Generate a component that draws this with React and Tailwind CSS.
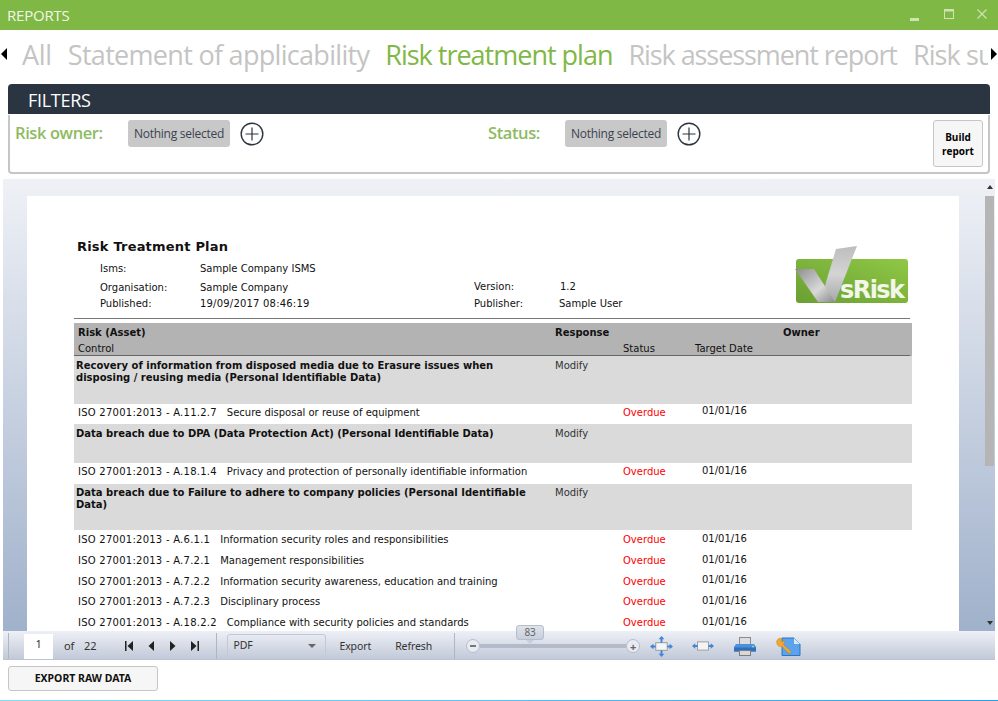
const tabs = [
  { label: 'All', cls: 'tracking-[-0.3px] text-[#c4c4c4]' },
  { label: 'Statement of applicability', cls: 'tracking-[-0.7px] text-[#c4c4c4]' },
  { label: 'Risk treatment plan', cls: 'tracking-[-1px] text-[#80b845]' },
  { label: 'Risk assessment report', cls: 'tracking-[-1.08px] text-[#c4c4c4]' },
  { label: 'Risk summary', cls: 'tracking-[-0.9px] text-[#c4c4c4]' },
]

const groups = [
  {
    risk: ['Recovery of information from disposed media due to Erasure issues when', 'disposing / reusing media (Personal Identifiable Data)'],
    h: 'h-[48px] pt-[4px]',
    controls: [{ name: 'ISO 27001:2013 - A.11.2.7', title: 'Secure disposal or reuse of equipment', h: 'h-[20px] pb-[4px]' }],
  },
  {
    risk: ['Data breach due to DPA (Data Protection Act) (Personal Identifiable Data)'],
    h: 'h-[39px] pt-[4px]',
    controls: [{ name: 'ISO 27001:2013 - A.18.1.4', title: 'Privacy and protection of personally identifiable information', h: 'h-[21px] pb-[4px]' }],
  },
  {
    risk: ['Data breach due to Failure to adhere to company policies (Personal Identifiable', 'Data)'],
    h: 'h-[46px] pt-[3px]',
    controls: [
      { name: 'ISO 27001:2013 - A.6.1.1', title: 'Information security roles and responsibilities', h: 'h-[21px] pb-[2px]' },
      { name: 'ISO 27001:2013 - A.7.2.1', title: 'Management responsibilities', h: 'h-[21px] pb-[2px]' },
      { name: 'ISO 27001:2013 - A.7.2.2', title: 'Information security awareness, education and training', h: 'h-[20px] pb-[2px]' },
      { name: 'ISO 27001:2013 - A.7.2.3', title: 'Disciplinary process', h: 'h-[21px] pb-[2px]' },
      { name: 'ISO 27001:2013 - A.18.2.2', title: 'Compliance with security policies and standards', h: 'h-[21px] pb-[2px]' },
    ],
  },
]

function PlusCircle() {
  return (
    <svg width="24" height="24" viewBox="0 0 24 24" fill="none" stroke="#2b3541">
      <circle cx="12" cy="12" r="10.8" strokeWidth="1.4" />
      <path d="M5.5 12h13M12 5.5v13" strokeWidth="1.2" />
    </svg>
  )
}

function Logo() {
  return (
    <svg width="114" height="60" viewBox="0 0 114 60" className="mt-[-10px] shrink-0">
      <defs>
        <linearGradient id="lg" x1="0" x2="1" y1="1" y2="0">
          <stop offset="0" stopColor="#6a9f33" />
          <stop offset="1" stopColor="#8fc845" />
        </linearGradient>
        <linearGradient id="lv" x1="0" x2="1" y1="0" y2="1">
          <stop offset="0" stopColor="#8c8c8c" />
          <stop offset="0.6" stopColor="#d9d9d9" />
          <stop offset="1" stopColor="#8a8a8a" />
        </linearGradient>
        <linearGradient id="ls" x1="0" x2="0" y1="1" y2="0">
          <stop offset="0" stopColor="#a8a8a8" />
          <stop offset="0.5" stopColor="#d4d4d4" />
          <stop offset="1" stopColor="#bdbdbd" />
        </linearGradient>
      </defs>
      <rect x="1" y="15" width="112" height="44" rx="3" fill="url(#lg)" />
      <path d="M41 5 L62 2 L40 58 L25 58 Z" fill="url(#ls)" />
      <path d="M0 25 L19 25 L40 58 L23 58 Z" fill="url(#lv)" />
      <text x="45" y="54" fontFamily="'DejaVu Sans', sans-serif" fontWeight="700" fontSize="24" fill="#f2f7ea" textLength="65">sRisk</text>
    </svg>
  )
}

function TransportIcon({ d }) {
  return (
    <svg width="8" height="10" viewBox="0 0 8 10" fill="#222">
      <path d={d} />
    </svg>
  )
}

function FitPage() {
  return (
    <svg width="23" height="21" viewBox="0 0 24 22">
      <rect x="6" y="7" width="12" height="8" fill="#f4f4f4" stroke="#9a9a9a" />
      <path d="M12 0l3 3.5H9zM12 22l-3-3.5h6zM0 11l3.500-3v6zM24 11l-3.500 3V8z" fill="#3f86d8" />
      <path d="M11 3h2v4h-2zM11 15h2v4h-2zM3 10h3v2H3zM18 10h3v2h-3z" fill="#3f86d8" />
    </svg>
  )
}

function FitWidth() {
  return (
    <svg width="22" height="12" viewBox="0 0 24 12">
      <rect x="6" y="1.500" width="12" height="9" fill="#f4f4f4" stroke="#9a9a9a" />
      <path d="M0 6l3.500-3v6zM24 6l-3.500 3V3z" fill="#3f86d8" />
      <path d="M3 5h3v2H3zM18 5h3v2h-3z" fill="#3f86d8" />
    </svg>
  )
}

function Printer() {
  return (
    <svg width="22" height="19" viewBox="0 0 22 19">
      <rect x="5.500" y="0.500" width="11" height="7" fill="#dcdcdc" stroke="#8c8c8c" />
      <path d="M2 7h18l2 3v4.500H0V10z" fill="#4a90dd" />
      <rect x="0" y="10.500" width="22" height="4" fill="#2f6fbc" />
      <rect x="5.500" y="13.500" width="11" height="5" fill="#d8d8d8" stroke="#7d7d7d" />
      <circle cx="19" cy="9.500" r="1" fill="#8fe08f" />
    </svg>
  )
}

function Params() {
  return (
    <svg width="25" height="19" viewBox="0 0 25 19">
      <path d="M6 1h12l6 6v11.500H6z" fill="#5ba4ec" stroke="#2f74c4" />
      <path d="M18 1v6h6z" fill="#d6e9fb" />
      <path d="M1 3.500c1-2 3.500-2.800 5-2L4.400 3.700l1.400 1.400L8 3.400c.8 1.400.3 3-.7 4l8 7.400-2 2-7.600-7.600c-1.500.6-3 .2-4-1C.9 7 .4 5 1 3.500z" fill="#f0a92c" stroke="#c47d12" strokeWidth="0.5" />
    </svg>
  )
}

function ToolSep() {
  return <div className="w-px h-[26px] bg-[#aeb6c6]" />
}

export default function App() {
  return (
    <div className="w-[998px] h-[701px] bg-white flex flex-col overflow-hidden font-['Open_Sans',sans-serif]">
      <div className="h-[30px] bg-[#80b845] flex items-center justify-between pl-[7px] pr-[11px] shrink-0">
        <span className="text-[#f1f7e8] text-[15px] tracking-[-0.2px]">REPORTS</span>
        <div className="flex items-start">
          <svg width="9" height="3" viewBox="0 0 9 3" className="mt-[9px]"><rect width="9" height="3" fill="#cfe3b4" /></svg>
          <svg width="10" height="10" viewBox="0 0 10 10" fill="none" stroke="#cfe3b4" className="ml-[25px]">
            <rect x="0.500" y="0.500" width="9" height="9" />
            <path d="M0 1.500h10" strokeWidth="2" />
          </svg>
          <svg width="10" height="10" viewBox="0 0 10 10" fill="none" stroke="#cfe3b4" strokeWidth="1.200" className="ml-[23px]">
            <path d="M0.500 0.500l9 9M9.500 0.500l-9 9" />
          </svg>
        </div>
      </div>

      <div className="h-[50px] flex items-center relative shrink-0 overflow-hidden pl-[22px] pr-[6px]">
        <div className="flex gap-[16px] text-[27px] whitespace-nowrap overflow-hidden w-[966px]">
          {tabs.map(t => (
            <span key={t.label} className={t.cls}>{t.label}</span>
          ))}
        </div>
        <div className="absolute left-[1px] top-[18px] w-0 h-0 border-y-[6px] border-y-transparent border-r-[6px] border-r-black" />
        <div className="absolute right-[1px] top-[18px] w-0 h-0 border-y-[6px] border-y-transparent border-l-[6px] border-l-black" />
      </div>

      <div className="px-[8px] mt-[4px] shrink-0">
        <div className="h-[30px] bg-[#2b3541] rounded-t-[4px] flex items-center pl-[20px] pt-[2px] text-white text-[18px] tracking-[-0.3px]">FILTERS</div>
        <div className="h-[59px] border-2 border-t-0 border-[#c6c6c6] rounded-b-[4px] flex pl-[5px] pr-[5px] pt-[5px] mt-[1px]">
          <span className="w-[113px] text-[#8dbb5f] text-[16.5px] font-semibold tracking-[-0.4px] pt-[1px] shrink-0">Risk owner:</span>
          <div className="w-[102px] h-[27px] bg-[#c8c8c8] rounded-[3px] text-[#3a4450] text-[12px] tracking-[-0.25px] flex items-center justify-center shrink-0">Nothing selected</div>
          <div className="ml-[10px] mt-[2px] shrink-0"><PlusCircle /></div>
          <span className="ml-[224px] w-[77px] text-[#8dbb5f] text-[16.5px] font-semibold tracking-[-0.4px] pt-[1px] shrink-0">Status:</span>
          <div className="w-[102px] h-[27px] bg-[#c8c8c8] rounded-[3px] text-[#3a4450] text-[12px] tracking-[-0.25px] flex items-center justify-center shrink-0">Nothing selected</div>
          <div className="ml-[10px] mt-[2px] shrink-0"><PlusCircle /></div>
          <button className="ml-auto w-[50px] h-[47px] bg-[#f6f6f6] border border-[#c6c6c6] rounded-[3px] text-[10px] leading-[14px] font-bold text-black pt-[1px]">Build<br />report</button>
        </div>
      </div>

      <div className="mt-[5px] ml-[3px] w-[992px] h-[481px] flex flex-col shrink-0">
        <div className="h-[452px] flex bg-gradient-to-b from-[#eff1f6] to-[#a0b1cb] overflow-hidden">
          <div className="pl-[24px] pt-[17px] w-[982px] shrink-0">
            <div className="w-[932px] h-[435px] bg-white overflow-hidden font-['DejaVu_Sans',sans-serif] text-[10px] text-[#111] flex flex-col">
              <div className="pl-[50px] pr-[50px] pt-[43px] flex-1">
                <h1 className="text-[13px] leading-[15px] font-bold tracking-[0.2px]">Risk Treatment Plan</h1>
                <div className="flex justify-between h-[65px] border-b border-[#777] ml-[-3px] pl-[26px] pr-[1px] w-[836px]">
                  <div className="grid grid-cols-[100px_274px_85px_auto] grid-rows-[20px_18px_14px] items-center pt-[4px] h-fit">
                    <span>Isms:</span>
                    <span className="col-span-3">Sample Company ISMS</span>
                    <span>Organisation:</span>
                    <span>Sample Company</span>
                    <span className="mt-[-2px]">Version:</span>
                    <span className="mt-[-2px] ml-[1px]">1.2</span>
                    <span>Published:</span>
                    <span className="tracking-[0.2px]">19/09/2017 08:46:19</span>
                    <span>Publisher:</span>
                    <span>Sample User</span>
                  </div>
                  <Logo />
                </div>
                <div className="ml-[-3px] w-[838px] mt-[4px]">
                  <div className="h-[33px] bg-[#b3b3b3]">
                    <div className="grid grid-cols-[477px_228px_auto] h-[18px] pt-[1px] items-center pl-[4px] font-bold">
                      <span>Risk (Asset)</span>
                      <span>Response</span>
                      <span>Owner</span>
                    </div>
                    <div className="grid grid-cols-[545px_72px_auto] h-[11px] items-center pl-[4px]">
                      <span>Control</span>
                      <span>Status</span>
                      <span>Target Date</span>
                    </div>
                    <div className="h-px bg-[#666] mt-[3px] w-[836px]" />
                  </div>
                  {groups.map((g, i) => (
                    <div key={i}>
                      <div className={`${g.h} bg-[#dadada] grid grid-cols-[479px_auto] pl-[2px] leading-[12px]`}>
                        <div className="font-bold">{g.risk.map(line => <div key={line}>{line}</div>)}</div>
                        <span className="text-[#333]">Modify</span>
                      </div>
                      {g.controls.map(c => (
                        <div key={c.name} className={`${c.h} grid grid-cols-[545px_79px_auto] items-center pl-[4px]`}>
                          <span className="whitespace-nowrap"><span className="tracking-[0.25px]">{c.name}</span><span className="ml-[10px]">{c.title}</span></span>
                          <span className="text-[#f00]">Overdue</span>
                          <span className="mt-[-3px]">01/01/16</span>
                        </div>
                      ))}
                    </div>
                  ))}
                </div>
              </div>
            </div>
          </div>
          <div className="w-[10px] flex flex-col items-center pt-[6px]">
            <div className="w-0 h-0 border-x-[3.5px] border-x-transparent border-b-[4px] border-b-[#333]" />
            <div className="w-[9px] h-[270px] bg-[#b5b5b5] mt-[7px] shrink-0 self-start" />
            <div className="w-0 h-0 border-x-[3.5px] border-x-transparent border-t-[4px] border-t-[#333] mt-[155px] shrink-0" />
          </div>
        </div>

        <div className="h-[29px] pt-[2px] bg-gradient-to-b from-[#eef0f6] to-[#c2c9d8] border-b border-[#bcc4d3] flex items-center text-[10.5px] tracking-[-0.1px] text-[#333] font-['Noto_Sans',sans-serif]">
          <div className="ml-[5px]"><ToolSep /></div>
          <div className="ml-[15px] w-[29px] h-[25px] bg-white flex items-center justify-center text-[11px] pb-[4px]">1</div>
          <span className="ml-[11px] w-[20px] text-[11px]">of</span>
          <span className="text-[11px]">22</span>
          <div className="ml-[29px] flex items-center gap-[14px]">
            <TransportIcon d="M0 0h1.500v10H0zM8 0v10L2.500 5z" />
            <TransportIcon d="M7 0v10L1.500 5z" />
            <TransportIcon d="M1 0v10l5.500-5z" />
            <TransportIcon d="M6.500 0H8v10H6.500zM0 0v10l5.500-5z" />
          </div>
          <div className="ml-[17px]"><ToolSep /></div>
          <div className="ml-[10px] w-[99px] h-[25px] border border-[#c2c8d4] rounded-[3px] flex items-center justify-between pl-[5px] pr-[9px]">
            <span>PDF</span>
            <div className="w-0 h-0 border-x-[4px] border-x-transparent border-t-[4px] border-t-[#666]" />
          </div>
          <span className="ml-[13px] pt-[1px]">Export</span>
          <span className="ml-[24px] pt-[1px]">Refresh</span>
          <div className="ml-[22px]"><ToolSep /></div>
          <div className="ml-[11px] w-[174px] flex items-center relative">
            <div className="w-[14px] h-[14px] rounded-full border border-[#b6bdcb] bg-[#e8ebf1] flex items-center justify-center shrink-0"><div className="w-[6px] h-[2px] bg-[#777]" /></div>
            <div className="flex-1 h-[4px] bg-[#b3bbcb]" />
            <div className="w-[14px] h-[14px] rounded-full border border-[#b6bdcb] bg-[#e8ebf1] flex items-center justify-center shrink-0 text-[#666] text-[11px] font-bold leading-none">+</div>
            <div className="absolute left-[50px] top-[-14px] w-[28px] h-[15px] bg-gradient-to-b from-[#dfe3ea] to-[#c8cfdc] border border-[#b6bdcb] rounded-[3px] text-[10px] leading-[13px] text-center text-[#666]">83</div>
            <div className="absolute left-[60px] top-[1px] w-0 h-0 border-x-[4px] border-x-transparent border-t-[4px] border-t-[#c8cfdc]" />
          </div>
          <div className="ml-[10px] flex items-center">
            <FitPage />
            <div className="ml-[19px]"><FitWidth /></div>
            <div className="ml-[20px]"><Printer /></div>
            <div className="ml-[20px]"><Params /></div>
          </div>
        </div>
      </div>

      <button className="ml-[8px] mt-[6px] w-[150px] h-[25px] bg-[#f6f6f6] border border-[#c6c6c6] rounded-[3px] text-[10.5px] font-bold text-[#111] shrink-0 font-['Noto_Sans',sans-serif]">EXPORT RAW DATA</button>
      <div className="mt-[9px] h-px bg-gradient-to-r from-[#7fe3f5] to-[#1ea0ee] shrink-0" />
    </div>
  )
}
